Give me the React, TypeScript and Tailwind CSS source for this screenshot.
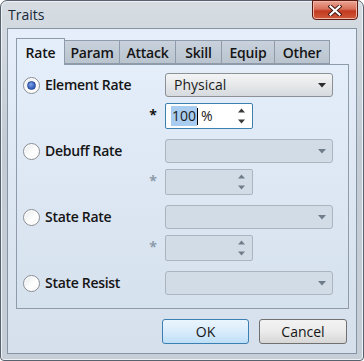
import React from "react";

const font = "font-['Open_Sans',sans-serif]";

function Radio({ checked }: { checked?: boolean }) {
  return (
    <div className="w-[17px] h-[17px] rounded-full border border-[#8b8f94] bg-[linear-gradient(135deg,#e6e8ea,#ffffff_60%,#f4f4f4)] flex items-center justify-center shadow-[inset_0_0_0_1px_#ffffff]">
      {checked && (
        <div className="w-[9px] h-[9px] rounded-full border border-[#26499a] bg-[radial-gradient(circle_at_40%_35%,#7fa3e6,#3a64c0_60%,#2a4fa8)]" />
      )}
    </div>
  );
}

function Arrow({ disabled }: { disabled?: boolean }) {
  return (
    <svg width="8" height="5" viewBox="0 0 8 5">
      <path d="M0 0 L8 0 L4 4.5 Z" fill={disabled ? "#6f7c8a" : "#2b2b2b"} />
    </svg>
  );
}

function Combo({ value, disabled }: { value?: string; disabled?: boolean }) {
  return (
    <div
      className={
        "w-[168px] h-[24px] rounded-[3px] border flex items-center justify-between pl-[8px] pr-[6px] " +
        (disabled
          ? "border-[#aab5c1] bg-[#d2dce7]"
          : "border-[#8d9195] bg-[linear-gradient(180deg,#f3f4f5,#e6e8ea_50%,#d6dade)]")
      }
    >
      <span className="text-[14px] leading-none text-[#1c1c1c]">{value}</span>
      <Arrow disabled={disabled} />
    </div>
  );
}

function Spin({ disabled, active }: { disabled?: boolean; active?: boolean }) {
  return (
    <div
      className={
        "w-[88px] h-[26px] border flex items-center justify-between pl-[5px] pr-[7px] " +
        (disabled
          ? "border-[#aab5c1] bg-[#d2dce7] rounded-[2px]"
          : "border-[#3c7fb1] bg-white rounded-[2px]")
      }
    >
      {active ? (
        <div className="flex items-center text-[14px] leading-none text-[#1c1c1c]">
          <span className="bg-[#a9cdf0] px-[1px] py-[3px]">100</span>
          <span className="w-px h-[17px] bg-black" />
          <span className="ml-[3px]">%</span>
        </div>
      ) : (
        <span />
      )}
      <div className="flex flex-col gap-[6px]">
        <svg width="7" height="5" viewBox="0 0 7 5">
          <path d="M3.5 0.5 L7 4.5 L0 4.5 Z" fill={disabled ? "#6f7c8a" : "#3a3a3a"} />
        </svg>
        <svg width="7" height="5" viewBox="0 0 7 5">
          <path d="M0 0.5 L7 0.5 L3.5 4.5 Z" fill={disabled ? "#6f7c8a" : "#3a3a3a"} />
        </svg>
      </div>
    </div>
  );
}

function Group({
  label,
  checked,
  disabled,
  value,
  spin = true,
}: {
  label: string;
  checked?: boolean;
  disabled?: boolean;
  value?: string;
  spin?: boolean;
}) {
  return (
    <div className="flex flex-col">
      <div className="flex items-center h-[24px]">
        <div className="w-[142px] flex items-center gap-[5px]">
          <Radio checked={checked} />
          <span className="text-[14px] font-semibold tracking-[-0.3px] text-[#151515] leading-none">{label}</span>
        </div>
        <Combo value={value} disabled={disabled} />
      </div>
      {spin && (
        <div className="flex h-[26px] mt-[6px]">
          <div className="w-[142px] flex justify-end pr-[8px] pt-[5px]">
            <span
              className={
                "text-[14px] leading-none font-bold " +
                (disabled ? "text-[#8d9bab]" : "text-[#151515]")
              }
            >
              *
            </span>
          </div>
          <Spin disabled={disabled} active={!disabled} />
        </div>
      )}
    </div>
  );
}

function Tab({ label, w, selected }: { label: string; w: number; selected?: boolean }) {
  if (selected) {
    return (
      <div
        style={{ width: w }}
        className="h-[27px] -mb-px relative z-10 border border-b-0 border-[#8e9bab] bg-[#e4eefa] flex items-center justify-center text-[14px] font-semibold tracking-[-0.2px] text-[#151515]"
      >
        {label}
      </div>
    );
  }
  return (
    <div
      style={{ width: w }}
      className="h-[24px] border border-l-0 border-[#8e9bab] bg-[linear-gradient(180deg,#c9d2dc,#b9c4cf)] flex items-center justify-center text-[14px] font-semibold tracking-[-0.2px] text-[#151515]"
    >
      {label}
    </div>
  );
}

export default function App() {
  return (
    <div className={"w-[364px] h-[361px] bg-white " + font}>
      <div className="w-full h-full flex flex-col rounded-t-[7px] rounded-b-[4px] border border-[#58626e] bg-[linear-gradient(180deg,#d6dce2,#c3ccd5_40%,#c6ced7)] shadow-[inset_0_0_0_1px_#eef2f5]">
        <div className="h-[27px] flex justify-between items-start">
          <span className="pl-[7px] pt-[5px] text-[14px] text-[#15283a] leading-[18px]">Traits</span>
          <div className="mr-[5px] -mt-px w-[46px] h-[20px] rounded-b-[4px] border border-[#5c1a10] bg-[linear-gradient(180deg,#eba494,#d8705a_45%,#c23a20_55%,#d05a3c)] flex items-center justify-center shadow-[inset_0_0_0_1px_#f0b5a6]">
            <svg width="14" height="11" viewBox="0 0 14 11">
              <path d="M2.5 1.5 L11.5 9.5 M11.5 1.5 L2.5 9.5" stroke="#3d1410" strokeWidth="4" strokeLinecap="square" />
              <path d="M2.5 1.5 L11.5 9.5 M11.5 1.5 L2.5 9.5" stroke="#ffffff" strokeWidth="2.2" strokeLinecap="square" />
            </svg>
          </div>
        </div>
        <div className="flex-1 mx-[6px] mb-[6px] border border-[#8593a2] bg-[linear-gradient(180deg,#e5eefa,#d5e0ec)] flex flex-col pl-[8px] pt-[9px] pb-[9px]">
          <div className="flex items-end h-[26px]">
            <Tab label="Rate" w={49} selected />
            <Tab label="Param" w={55} />
            <Tab label="Attack" w={56} />
            <Tab label="Skill" w={46} />
            <Tab label="Equip" w={53} />
            <Tab label="Other" w={55} />
          </div>
          <div className="w-[333px] h-[245px] border border-[#8e9bab] bg-[linear-gradient(180deg,#e4eefa,#d6e1ee)] pl-[6px] pt-[8px] flex flex-col gap-[10px]">
            <Group label="Element Rate" checked value="Physical" />
            <Group label="Debuff Rate" disabled />
            <Group label="State Rate" disabled />
            <Group label="State Resist" disabled spin={false} />
          </div>
          <div className="w-[333px] flex justify-end gap-[10px] pr-[2px] mt-[10px]">
            <div className="w-[87px] h-[25px] rounded-[3px] border border-[#3c7fb1] bg-[linear-gradient(180deg,#eaf5fd,#d9ecfb_50%,#bedff7)] flex items-center justify-center text-[14px] font-medium text-[#151515]">
              OK
            </div>
            <div className="w-[88px] h-[25px] rounded-[3px] border border-[#707070] bg-[linear-gradient(180deg,#f2f2f2,#ebebeb_50%,#d6d6d6)] flex items-center justify-center text-[14px] font-medium text-[#151515]">
              Cancel
            </div>
          </div>
        </div>
      </div>
    </div>
  );
}
